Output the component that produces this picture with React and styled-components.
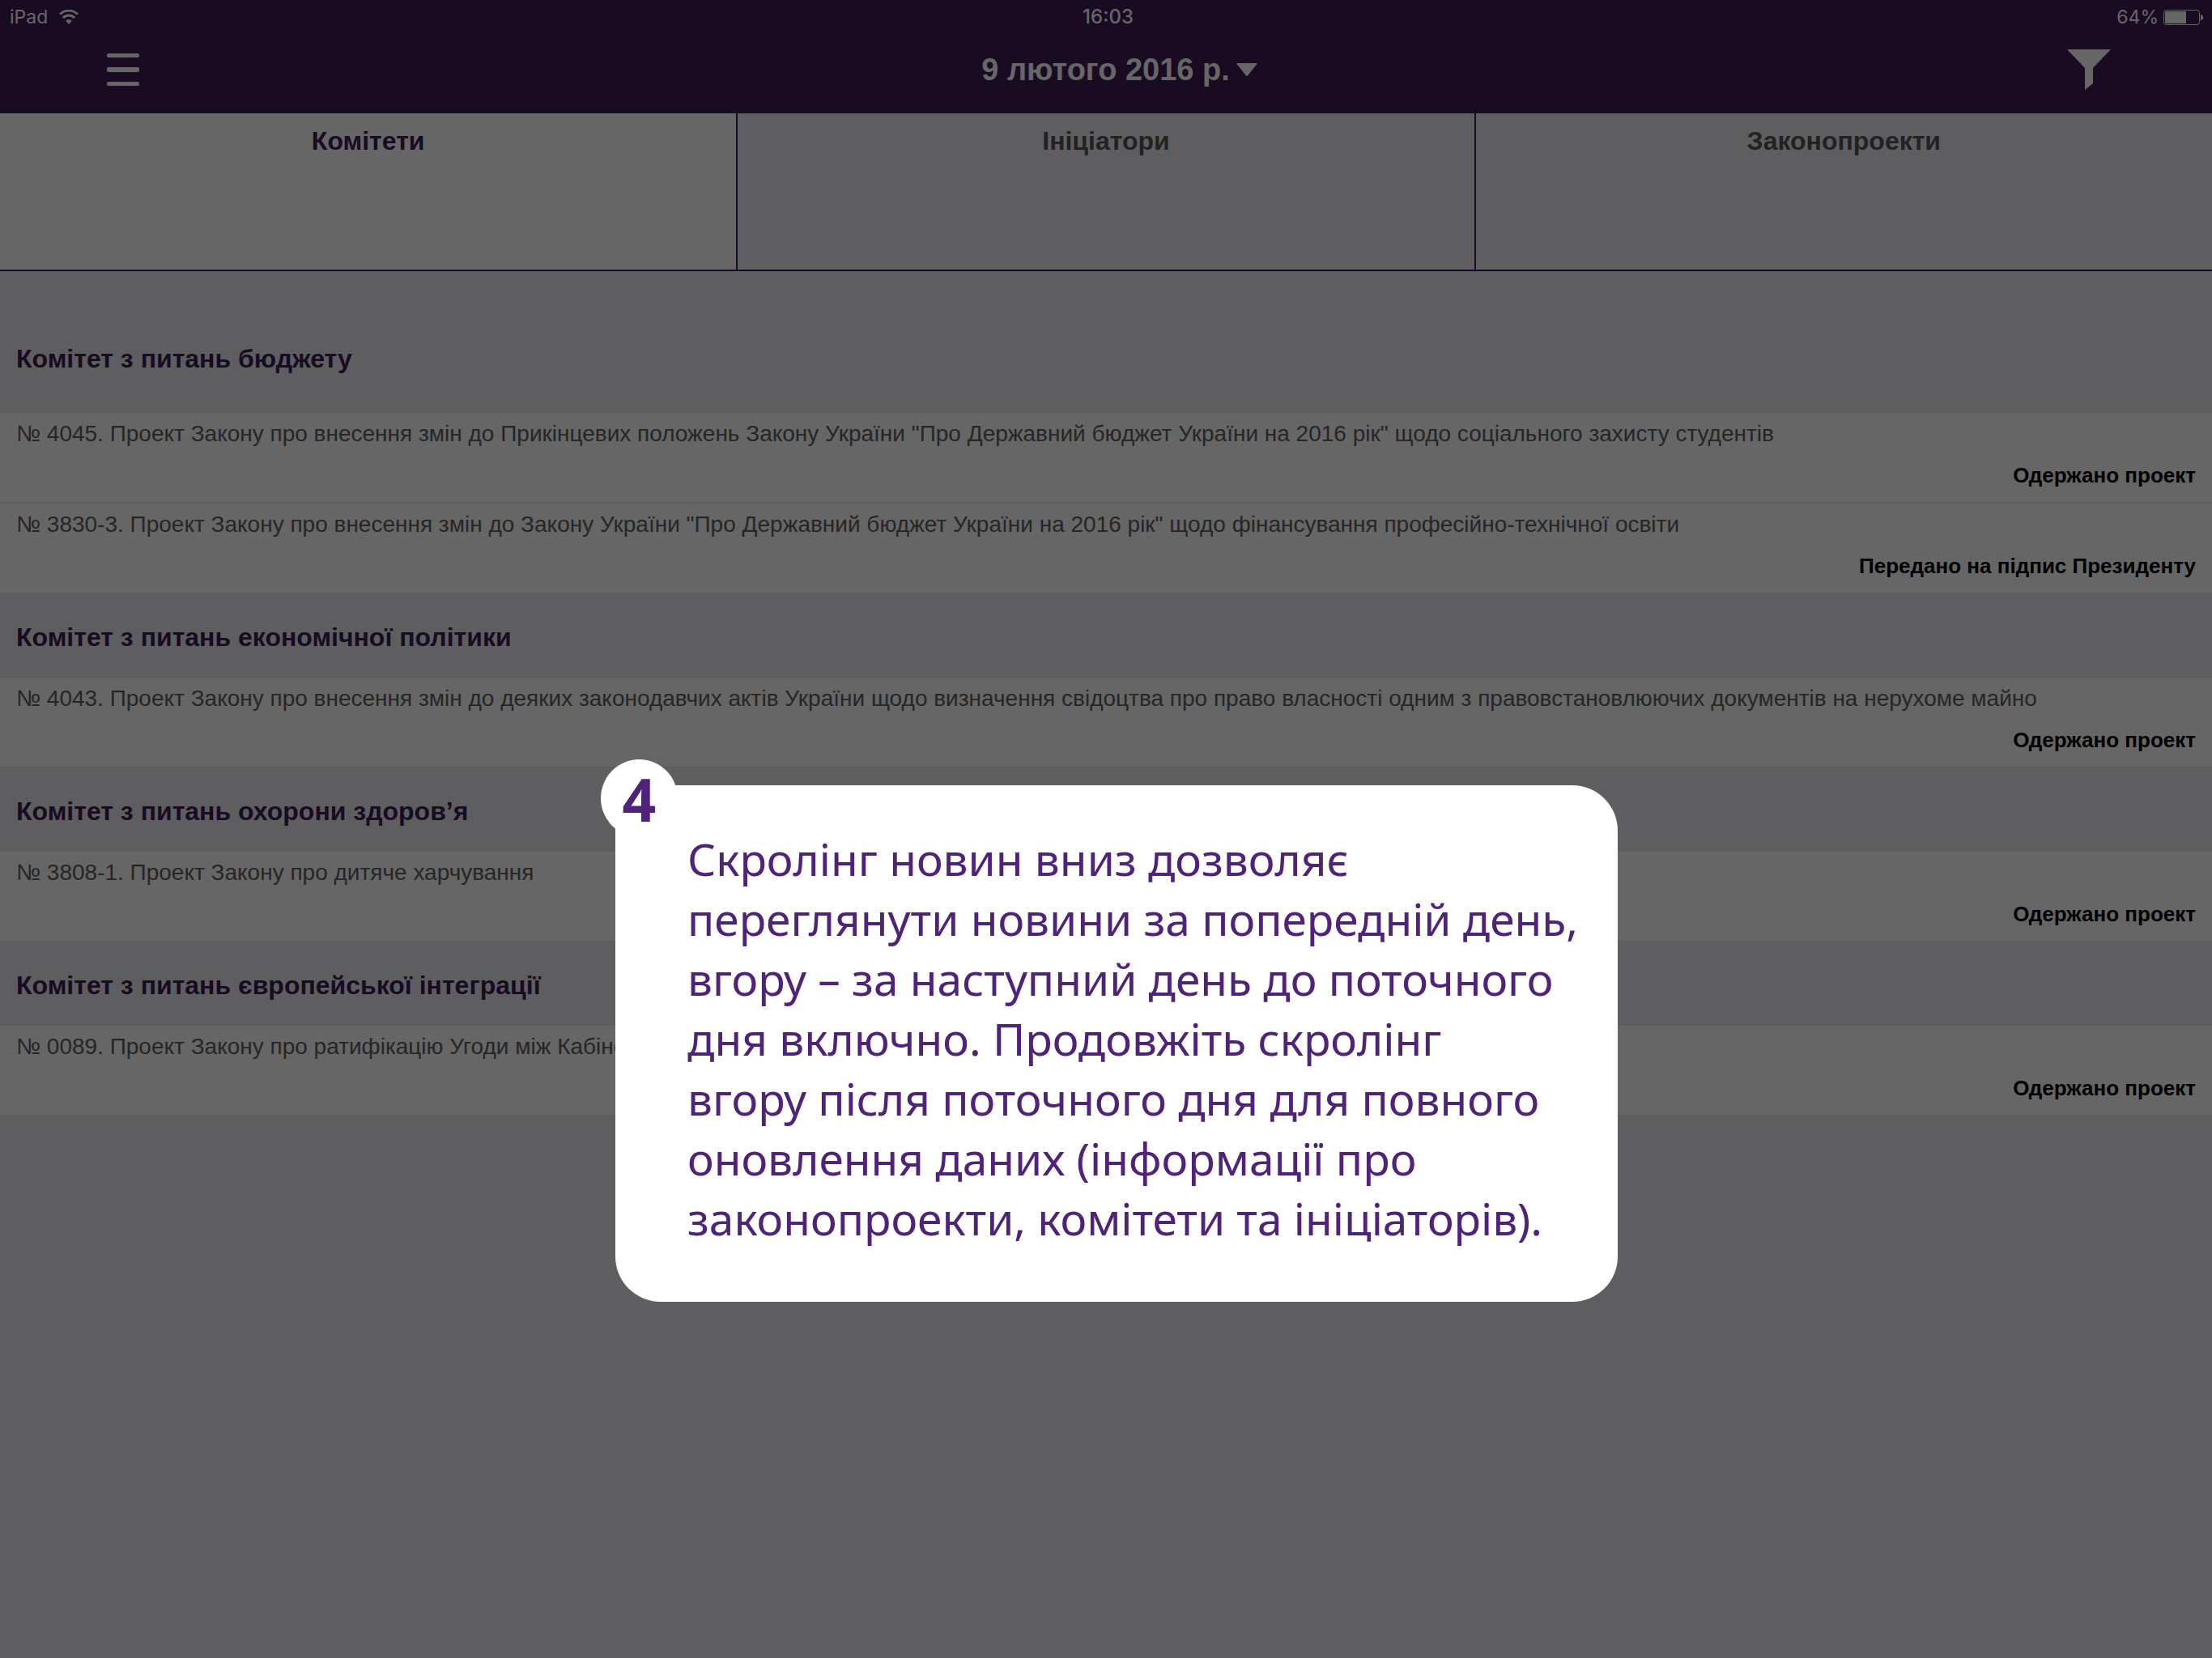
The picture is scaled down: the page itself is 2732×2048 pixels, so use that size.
import React from 'react';
import styled, { createGlobalStyle } from 'styled-components';

const ink = '#3c1c56';
const surface = '#ebebf0';

const GlobalStyle = createGlobalStyle`
  * { box-sizing: border-box; }
  body {
    margin: 0;
    background: ${surface};
    font-family: "Liberation Sans", Arial, sans-serif;
  }
  h1, h2, p, ul { margin: 0; padding: 0; }
  button { border: 0; background: none; padding: 0; font: inherit; color: inherit; }
`;

const Page = styled.div`
  position: relative;
  min-height: 100vh;
  background: ${surface};
`;

const Header = styled.header`
  height: 140px;
  background: ${ink};
  color: #fff;
`;

const StatusBar = styled.div`
  display: grid;
  grid-template-columns: 1fr auto 1fr;
  align-items: center;
  height: 42px;
  padding: 0 11px 0 12px;
  font: 400 23px/42px Inter, sans-serif;
`;

const StatusGroup = styled.div`
  display: flex;
  align-items: center;
  justify-content: ${(p) => (p.$end ? 'flex-end' : 'flex-start')};
  gap: ${(p) => (p.$end ? 6 : 14)}px;
`;

const Clock = styled.time`
  padding-left: 4px;
  font-size: 24px;
  font-weight: 500;
`;

const NavBar = styled.div`
  display: grid;
  grid-template-columns: 1fr auto 1fr;
  align-items: center;
  height: 88px;
  padding: 0 125px 0 132px;
`;

const IconButton = styled.button`
  display: flex;
  justify-self: ${(p) => (p.$end ? 'end' : 'start')};
`;

const DateButton = styled.button`
  display: flex;
  align-items: center;
  gap: 8px;
  margin-left: 26px;
  font-size: 38px;
  font-weight: 700;
  line-height: 40px;
`;

const Tabs = styled.nav`
  display: grid;
  grid-template-columns: repeat(3, 1fr);
  gap: 2px;
  height: 195px;
  background: ${ink};
  border-bottom: 2px solid ${ink};
`;

const Tab = styled.button`
  display: flex;
  justify-content: center;
  align-items: flex-start;
  padding-top: 16px;
  background: ${(p) => (p.$active ? '#fff' : surface)};
  color: ${(p) => (p.$active ? ink : '#555')};
  font-size: 32px;
  font-weight: 700;
  line-height: 36px;
`;

const Feed = styled.main`
  padding-top: 55px;
`;

const GroupTitle = styled.h2`
  height: ${(p) => (p.$first ? 120 : 103)}px;
  padding: 0 20px;
  color: ${ink};
  font-size: 32px;
  font-weight: 700;
  line-height: 106px;
`;

const Bills = styled.ul`
  list-style: none;
`;

const Bill = styled.li`
  height: 112px;
  padding: 8px 20px 0;
  background: #fff;
  border-bottom: 2px solid ${surface};
  line-height: 36px;
`;

const BillName = styled.p`
  color: #606060;
  font-size: 28px;
  white-space: nowrap;
`;

const BillStatus = styled.p`
  margin-top: 15px;
  color: #000;
  font-size: 26px;
  font-weight: 700;
  text-align: right;
`;

const Overlay = styled.div`
  position: absolute;
  inset: 0;
  display: flex;
  justify-content: center;
  align-items: flex-start;
  padding: 970px 0 0 26px;
  background: rgba(0, 0, 0, 0.6);
`;

const HintCard = styled.section`
  position: relative;
  width: 1238px;
  padding: 54px 0 66px 89px;
  border-radius: 56px;
  background: #fff;
  color: #4f2379;
  font-family: "Noto Sans", sans-serif;
`;

const HintText = styled.p`
  font-size: 55px;
  line-height: 74px;
  white-space: pre-line;
`;

const Badge = styled.span`
  position: absolute;
  top: -32px;
  left: -18px;
  display: flex;
  align-items: center;
  justify-content: center;
  width: 95px;
  height: 96px;
  padding-top: 2px;
  border-radius: 50%;
  background: #fff;
  font-size: 73px;
  font-weight: 700;
  line-height: 96px;
`;

const groups = [
  {
    title: 'Комітет з питань бюджету',
    bills: [
      ['№ 4045. Проект Закону про внесення змін до Прикінцевих положень Закону України "Про Державний бюджет України на 2016 рік" щодо соціального захисту студентів', 'Одержано проект'],
      ['№ 3830-3. Проект Закону про внесення змін до Закону України "Про Державний бюджет України на 2016 рік" щодо фінансування професійно-технічної освіти', 'Передано на підпис Президенту'],
    ],
  },
  {
    title: 'Комітет з питань економічної політики',
    bills: [
      ['№ 4043. Проект Закону про внесення змін до деяких законодавчих актів України щодо визначення свідоцтва про право власності одним з правовстановлюючих документів на нерухоме майно', 'Одержано проект'],
    ],
  },
  {
    title: 'Комітет з питань охорони здоров’я',
    bills: [['№ 3808-1. Проект Закону про дитяче харчування', 'Одержано проект']],
  },
  {
    title: 'Комітет з питань європейської інтеграції',
    bills: [['№ 0089. Проект Закону про ратифікацію Угоди між Кабіне', 'Одержано проект']],
  },
];

const hint = `Скролінг новин вниз дозволяє
переглянути новини за попередній день,
вгору – за наступний день до поточного
дня включно. Продовжіть скролінг
вгору після поточного дня для повного
оновлення даних (інформації про
законопроекти, комітети та ініціаторів).`;

const WifiIcon = () => (
  <svg width="24" height="18" viewBox="0 0 24 18" aria-hidden="true">
    <g fill="none" stroke="#fff" strokeWidth="2.8">
      <path d="M1 5.6a15.6 15.6 0 0 1 22 0" />
      <path d="M4.8 10a10.2 10.2 0 0 1 14.4 0" />
    </g>
    <path d="M12 18l-4-4.4a5.8 5.8 0 0 1 8 0z" fill="#fff" />
  </svg>
);

const BatteryIcon = () => (
  <svg width="49" height="19" viewBox="0 0 49 19" aria-hidden="true">
    <rect x="0.5" y="0.5" width="44" height="18" rx="3" fill="none" stroke="#fff" />
    <rect x="2" y="2" width="26" height="15" rx="1" fill="#fff" />
    <path d="M46 6q3 0 3 3.500t-3 3.500z" fill="#fff" />
  </svg>
);

const MenuIcon = () => (
  <svg width="40" height="40" viewBox="0 0 40 40" aria-hidden="true" fill="#fff">
    <rect y="0" width="40" height="5" rx="2" />
    <rect y="17" width="40" height="6" rx="2" />
    <rect y="35" width="40" height="5" rx="2" />
  </svg>
);

const FilterIcon = () => (
  <svg width="54" height="50" viewBox="0 0 54 50" aria-hidden="true">
    <path d="M0 0H54L32 23V42L22 50V23z" fill="#fff" />
  </svg>
);

const CaretIcon = () => (
  <svg width="26" height="16" viewBox="0 0 26 16" aria-hidden="true">
    <path d="M1 0H25Q26 0 25.500 1L14 15.400Q13 16 12 15.400L.5 1Q0 0 1 0z" fill="#fff" />
  </svg>
);

export default function App() {
  return (
    <Page>
      <GlobalStyle />
      <Header>
        <StatusBar>
          <StatusGroup>
            iPad
            <WifiIcon />
          </StatusGroup>
          <Clock>16:03</Clock>
          <StatusGroup $end>
            64%
            <BatteryIcon />
          </StatusGroup>
        </StatusBar>
        <NavBar>
          <IconButton aria-label="Меню"><MenuIcon /></IconButton>
          <DateButton>9 лютого 2016 р.<CaretIcon /></DateButton>
          <IconButton $end aria-label="Фільтр"><FilterIcon /></IconButton>
        </NavBar>
      </Header>
      <Tabs>
        <Tab $active>Комітети</Tab>
        <Tab>Ініціатори</Tab>
        <Tab>Законопроекти</Tab>
      </Tabs>
      <Feed>
        {groups.map((group, index) => (
          <section key={group.title}>
            <GroupTitle $first={index === 0}>{group.title}</GroupTitle>
            <Bills>
              {group.bills.map(([name, status]) => (
                <Bill key={name}>
                  <BillName>{name}</BillName>
                  <BillStatus>{status}</BillStatus>
                </Bill>
              ))}
            </Bills>
          </section>
        ))}
      </Feed>
      <Overlay>
        <HintCard>
          <Badge>4</Badge>
          <HintText>{hint}</HintText>
        </HintCard>
      </Overlay>
    </Page>
  );
}
